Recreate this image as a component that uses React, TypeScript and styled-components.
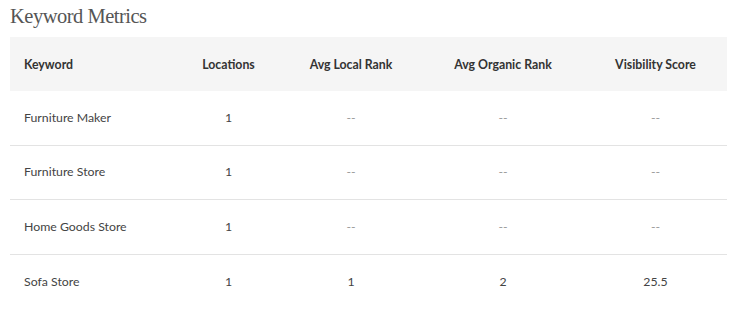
import styled, { createGlobalStyle } from 'styled-components';

type Row = {
  keyword: string;
  locations: string;
  local: string;
  organic: string;
  visibility: string;
};

const rows: Row[] = [
  { keyword: 'Furniture Maker', locations: '1', local: '--', organic: '--', visibility: '--' },
  { keyword: 'Furniture Store', locations: '1', local: '--', organic: '--', visibility: '--' },
  { keyword: 'Home Goods Store', locations: '1', local: '--', organic: '--', visibility: '--' },
  { keyword: 'Sofa Store', locations: '1', local: '1', organic: '2', visibility: '25.5' },
];

const App = () => {
  return (
    <>
      <GlobalStyle />
      <Page>
        <Title>Keyword Metrics</Title>
        <Table>
          <HeadRow>
            <HeadCell>Keyword</HeadCell>
            <HeadCell $center>Locations</HeadCell>
            <HeadCell $center>Avg Local Rank</HeadCell>
            <HeadCell $center>Avg Organic Rank</HeadCell>
            <HeadCell $center>Visibility Score</HeadCell>
          </HeadRow>
          {rows.map((row, i) => (
            <BodyRow key={row.keyword} $last={i === rows.length - 1}>
              <Cell>{row.keyword}</Cell>
              <Cell $center>{row.locations}</Cell>
              <Cell $center $muted={row.local === '--'}>{row.local}</Cell>
              <Cell $center $muted={row.organic === '--'}>{row.organic}</Cell>
              <Cell $center $muted={row.visibility === '--'}>{row.visibility}</Cell>
            </BodyRow>
          ))}
        </Table>
      </Page>
    </>
  );
};

export default App;

const GlobalStyle = createGlobalStyle`
  body {
    margin: 0;
    background: #fff;
    font-family: Lato, "Open Sans", sans-serif;
  }
`;

const Page = styled.div`
  width: 738px;
  height: 316px;
  padding: 0 10px;
  box-sizing: border-box;
  overflow: hidden;
`;

const Title = styled.h2`
  margin: 0;
  height: 37px;
  padding-top: 2px;
  box-sizing: border-box;
  font-family: "Liberation Serif", serif;
  font-weight: 400;
  font-size: 20.5px;
  letter-spacing: -0.5px;
  line-height: 28px;
  color: #555;
`;

const Table = styled.div`
  width: 717px;
  display: grid;
`;

const HeadRow = styled.div`
  display: grid;
  grid-template-columns: 160px 117px 128px 176px 129px;
  align-items: center;
  height: 54px;
  background: #f5f5f5;
`;

const BodyRow = styled.div<{ $last?: boolean }>`
  display: grid;
  grid-template-columns: 160px 117px 128px 176px 129px;
  align-items: center;
  box-sizing: border-box;
  height: 54.5px;
  padding-bottom: 1px;
  border-bottom: ${(p) => (p.$last ? 'none' : '1px solid #e3e3e3')};
`;

const HeadCell = styled.div<{ $center?: boolean }>`
  padding-left: ${(p) => (p.$center ? '0' : '14px')};
  text-align: ${(p) => (p.$center ? 'center' : 'left')};
  font-size: 12.3px;
  font-weight: 700;
  color: #333;
  white-space: nowrap;
`;

const Cell = styled.div<{ $center?: boolean; $muted?: boolean }>`
  padding-left: ${(p) => (p.$center ? '0' : '14px')};
  text-align: ${(p) => (p.$center ? 'center' : 'left')};
  font-size: 12.3px;
  color: ${(p) => (p.$muted ? '#999' : '#444')};
  white-space: nowrap;
`;
